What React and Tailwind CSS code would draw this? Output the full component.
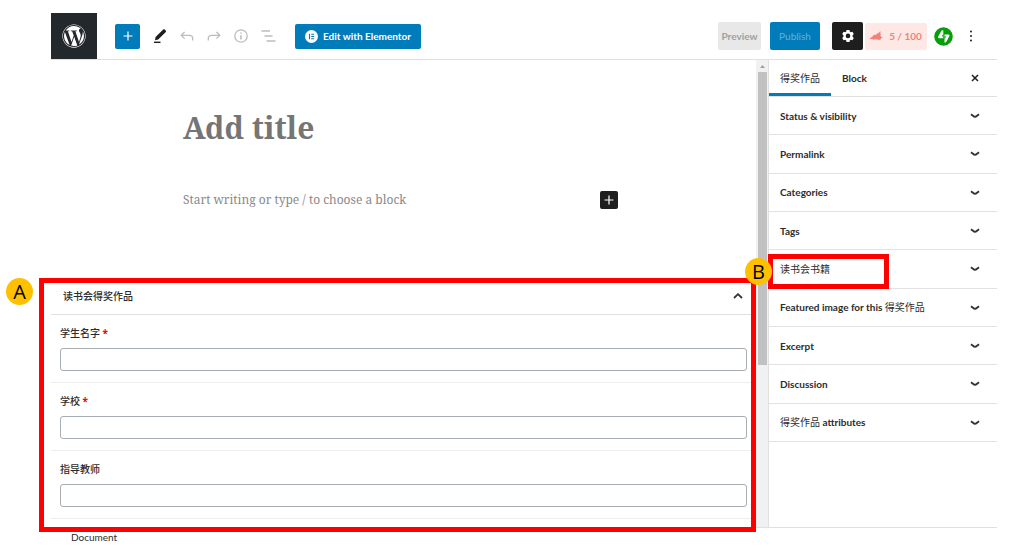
import { FaWordpress } from "react-icons/fa";

const panels = [
  { latin: "Status & visibility" },
  { latin: "Permalink" },
  { latin: "Categories" },
  { latin: "Tags" },
  { han: "读书会书籍", marked: true },
  { latin: "Featured image for this ", han: "得奖作品" },
  { latin: "Excerpt" },
  { latin: "Discussion" },
  { han: "得奖作品", tail: " attributes" },
];

const fields = [
  { id: "student", label: "学生名字", required: true },
  { id: "school", label: "学校", required: true },
  { id: "teacher", label: "指导教师", required: false },
];

function Chevron({ up = false }) {
  return (
    <svg width="10" height="6" viewBox="0 0 10 6" fill="none" stroke="#333" strokeWidth="1.8" aria-hidden="true">
      <path d={up ? "M1 5 5 1.2 9 5" : "M1 1.2C2.6 2.4 4 3.9 5 3.9S7.4 2.4 9 1.2"} />
    </svg>
  );
}

function Badge({ children }) {
  return (
    <span className="flex size-[27px] items-center justify-center rounded-full bg-[#ffc000] font-['Open_Sans',sans-serif] text-xl leading-none font-normal text-black">
      {children}
    </span>
  );
}

function Toolbar() {
  return (
    <header className="flex h-[47px] items-center border-b border-[#e0e0e0]">
      <a href="#dashboard" aria-label="View posts" className="flex size-[46px] items-center justify-center bg-[#23282d] text-white">
        <FaWordpress size={24} />
      </a>
      <button aria-label="Add block" className="ml-[18px] flex size-[25px] items-center justify-center rounded-xs bg-[#007cba]">
        <svg width="10" height="10" viewBox="0 0 10 10" stroke="#fff" strokeWidth="1.2">
          <path d="M5 0.5v9M0.5 5h9" />
        </svg>
      </button>
      <div className="ml-3 flex items-center gap-[11px]">
        <button aria-label="Tools" className="flex w-4 justify-center">
          <svg width="14" height="16" viewBox="0 0 14 16">
            <path d="M2 12.3 2.6 9 10.2 1.4c.9-.9 3.6 1.4 2.6 2.6L5.2 11.6Z" fill="#1e1e1e" />
            <path d="M1 14.3h6.5" stroke="#1e1e1e" strokeWidth="1.4" />
          </svg>
        </button>
        <button aria-label="Undo" className="flex w-4 justify-center">
          <svg width="14" height="11" viewBox="0 0 14 11" fill="none" stroke="#bdbdbd" strokeWidth="1.3">
            <path d="M4.6 1 1.2 4.3l3.4 3.3M1.2 4.3h8.3c2 0 3.2 1.2 3.2 3.1V9.5" />
          </svg>
        </button>
        <button aria-label="Redo" className="flex w-4 justify-center">
          <svg width="14" height="11" viewBox="0 0 14 11" fill="none" stroke="#bdbdbd" strokeWidth="1.3">
            <path d="M9.4 1l3.4 3.3-3.4 3.3M12.8 4.3H4.5c-2 0-3.2 1.2-3.2 3.1V9.5" />
          </svg>
        </button>
        <button aria-label="Details" className="flex w-4 justify-center">
          <svg width="14" height="14" viewBox="0 0 14 14" fill="none" stroke="#bdbdbd" strokeWidth="1.3">
            <circle cx="7" cy="7" r="6.2" />
            <path d="M7 6.2v4.2M7 3.4v1.4" strokeWidth="1.6" />
          </svg>
        </button>
        <button aria-label="Outline" className="flex w-4 justify-center">
          <svg width="15" height="12" viewBox="0 0 15 12" stroke="#bdbdbd" strokeWidth="1.4">
            <path d="M0.5 1h8.5M3.5 6h8M5.5 11h9" />
          </svg>
        </button>
      </div>
      <button className="ml-[19px] flex h-[25px] w-[126px] items-center justify-between rounded-xs bg-[#007cba] px-[10px] text-[10px] font-bold whitespace-nowrap text-white">
        <svg width="13" height="13" viewBox="0 0 13 13" className="shrink-0" aria-hidden="true">
          <circle cx="6.5" cy="6.5" r="6.5" fill="#fff" />
          <path d="M4.5 3.8v5.4M6.2 4.3h3M6.2 6.5h3M6.2 8.700h3" stroke="#007cba" strokeWidth="1.1" />
        </svg>
        Edit with Elementor
      </button>
      <div className="ml-auto flex items-center">
        <button className="h-7 w-[43px] rounded-xs bg-[#e8e8e8] text-[10px] font-bold text-[#a0a0a0]">Preview</button>
        <button className="ml-[9px] h-7 w-[50px] rounded-xs bg-[#007cba] text-[10px] text-[#66b0d6]">Publish</button>
        <button aria-label="Settings" className="ml-3 flex h-7 w-[31px] items-center justify-center rounded-xs bg-[#1e1e1e]">
          <svg width="12" height="12" viewBox="1 1 12 12">
            <path
              fill="#fff"
              fillRule="evenodd"
              d="M5.6 1h2.8l.4 1.6 1 .6 1.6-.5 1.4 2.4-1.2 1.2v1.4l1.2 1.2-1.4 2.4-1.6-.5-1 .6-.4 1.6H5.6l-.4-1.6-1-.6-1.6.5L1.2 8.9l1.200-1.2V6.3L1.2 5.1l1.400-2.400 1.600.5 1-.6ZM7 4.600a2.300 2.300 0 1 0 0 4.600 2.300 2.300 0 0 0 0-4.600Z"
            />
          </svg>
        </button>
        <button className="ml-[2px] flex h-[27px] w-[62px] items-center justify-center gap-[6px] rounded-xs bg-[#fde8e6] text-[10px] font-bold text-[#f0827b]">
          <svg width="13" height="10" viewBox="0 0 13 10" fill="#f0827b">
            <path d="M0 7.2 2.800 5.200 3 4.500 5 3.500 5.500 4.200 8 1.800 8.300 2.600 10.300 0l.5 5.800 2.200.8-2 .6-.6 1.800-4.800-.8-2.800.6-.6-1L0 8.300Z" />
          </svg>
          <span>5 / 100</span>
        </button>
        <button aria-label="Jetpack" className="ml-[7px]">
          <svg width="19" height="19" viewBox="0 0 19 19">
            <circle cx="9.5" cy="9.5" r="9.3" fill="#069e08" />
            <path
              d="M9.300 3.500v7.700H5.200c-1.200 0-1.500-.8-1-1.700L7 4.400c.8-1.300 1.300-1.500 2.300-.9ZM10.500 15.600V7.500h3.800c1.200 0 1.500.8 1 1.700l-2.800 5.400c-.6 1-1.200 1.200-2 1Z"
              fill="#fff"
            />
            <path d="M9.300 6.800v2.600H7.700ZM10.500 12.500V9.300h1.600Z" fill="#069e08" />
          </svg>
        </button>
        <button aria-label="Options" className="mr-[18px] ml-[10px] flex w-4 justify-center">
          <svg width="4" height="12" viewBox="0 0 4 12" fill="#1e1e1e">
            <circle cx="2" cy="1.5" r="1" />
            <circle cx="2" cy="6" r="1" />
            <circle cx="2" cy="10.5" r="1" />
          </svg>
        </button>
      </div>
    </header>
  );
}

function MetaBox() {
  return (
    <section className="relative mt-auto pb-2">
      <h2 className="border-b border-[#e0e0e0]">
        <button className="flex h-9 w-full items-center justify-between pr-[13px] pl-3 text-[10px] font-medium">
          读书会得奖作品
          <Chevron up />
        </button>
      </h2>
      {fields.map((f) => (
        <div key={f.id} className="flex flex-col border-b border-[#eeeeee] px-[9px] pt-[10px] pb-[11px]">
          <label htmlFor={f.id} className="mb-[7px] text-[10px] leading-4 font-medium">
            {f.label}
            {f.required && <span className="font-['Open_Sans',sans-serif] font-bold text-[#ff0000]"> *</span>}
          </label>
          <input id={f.id} type="text" className="h-[23px] w-full rounded-[3px] border border-[#a7adb3] px-2 text-[11px]" />
        </div>
      ))}
      <div className="pointer-events-none absolute top-0 right-0 -bottom-[5px] -left-3 border-5 border-[#ff0000]" />
      <div className="absolute top-0 -left-[45px]">
        <Badge>A</Badge>
      </div>
    </section>
  );
}

function Editor() {
  return (
    <main className="flex min-w-0 flex-1 flex-col">
      <div className="mr-[138px] ml-[132px] pt-[46px]">
        <h1 className="font-['Noto_Serif','DejaVu_Serif',serif] text-3xl leading-[44px] font-bold text-[#757575]">Add title</h1>
        <div className="mt-10 flex items-center justify-between">
          <p className="font-['Noto_Serif','DejaVu_Serif',serif] text-xs leading-5 text-[#8a8a8a]">Start writing or type / to choose a block</p>
          <button aria-label="Add block" className="flex size-[18px] items-center justify-center rounded-xs bg-[#1e1e1e]">
            <svg width="10" height="10" viewBox="0 0 10 10" stroke="#fff" strokeWidth="1.2">
              <path d="M5 0.5v9M0.5 5h9" />
            </svg>
          </button>
        </div>
      </div>
      <MetaBox />
    </main>
  );
}

function Scrollbar() {
  return (
    <div aria-hidden="true" className="flex w-3 flex-col items-center bg-[#f1f1f1]">
      <svg className="h-3 w-[5px]" viewBox="0 0 5 12" fill="#a0a0a0">
        <path d="M0 8 2.5 5 5 8Z" />
      </svg>
      <div className="h-[293px] w-[9px] bg-[#c1c1c1]" />
    </div>
  );
}

function Sidebar() {
  return (
    <aside className="w-[229px] shrink-0 border-l border-[#e0e0e0]">
      <div className="flex h-[37px] border-b border-[#e0e0e0] text-[10px]">
        <button className="h-9 w-[62px] border-b-3 border-[#007cba] pt-[3px]">得奖作品</button>
        <button className="h-9 px-[11px] font-bold">Block</button>
        <button aria-label="Close settings" className="mr-[18px] ml-auto">
          <svg width="8" height="8" viewBox="0 0 8 8" stroke="#1e1e1e" strokeWidth="1.5">
            <path d="m1 1 6 6M7 1 1 7" />
          </svg>
        </button>
      </div>
      <div className="grid h-[345px] auto-rows-fr">
        {panels.map((p, i) => (
          <h2 key={i} className="relative border-b border-[#e2e2e2]">
            <button className="flex h-full w-full items-center justify-between pt-px pr-[17px] pl-[11px] text-left text-[10px] font-bold">
              <span>
                {p.latin}
                {p.han && <span className="font-normal">{p.han}</span>}
                {p.tail}
              </span>
              <Chevron />
            </button>
            {p.marked && (
              <>
                <div className="pointer-events-none absolute top-1 -left-px h-[35px] w-[121px] border-5 border-[#ff0000]" />
                <div className="absolute top-2 -left-6">
                  <Badge>B</Badge>
                </div>
              </>
            )}
          </h2>
        ))}
      </div>
    </aside>
  );
}

export default function App() {
  return (
    <div className="min-h-screen bg-white pt-[13px] pr-[27px] pl-[51px] font-['Lato','Noto_Sans_CJK_SC',sans-serif] text-[#2c2c2c]">
      <Toolbar />
      <div className="flex min-h-[467px]">
        <Editor />
        <Scrollbar />
        <Sidebar />
      </div>
      <footer className="border-t border-[#e0e0e0] px-5 text-[10px] leading-[19px]">Document</footer>
    </div>
  );
}
